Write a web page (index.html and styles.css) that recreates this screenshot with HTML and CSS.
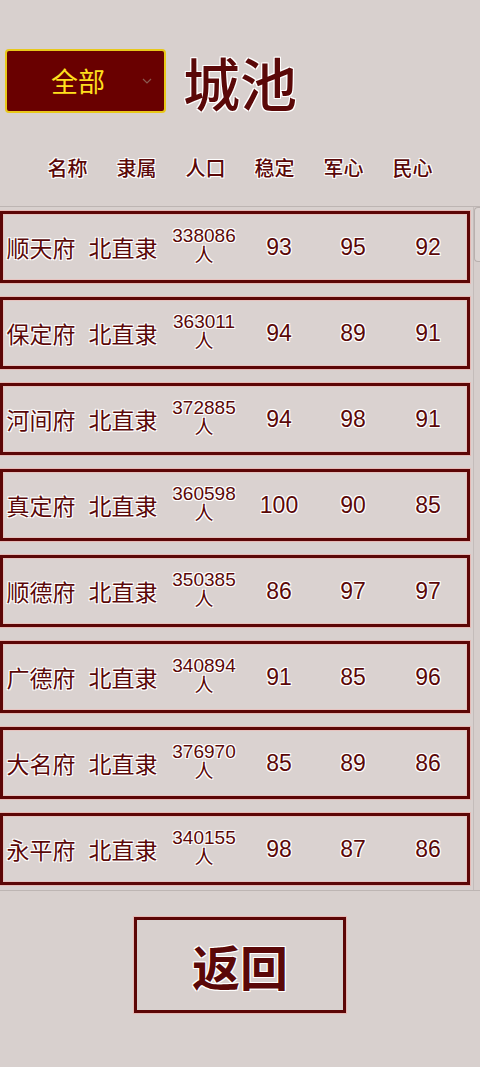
FILE: index.html
```html
<!DOCTYPE html>
<html lang="zh">
<head>
<meta charset="utf-8">
<title>城池</title>
<link rel="stylesheet" href="styles.css">
</head>
<body>
<div class="page">
  <div class="top">
    <div class="select">
      <span class="select-label">全部</span>
      <svg class="chev" width="10" height="6" viewBox="0 0 10 6"><path d="M1 1 L5 5 L9 1" fill="none" stroke="#8a5a50" stroke-width="1.2"/></svg>
    </div>
    <h1 class="title">城池</h1>
  </div>
  <div class="head">
    <span>名称</span><span>隶属</span><span>人口</span><span>稳定</span><span>军心</span><span>民心</span>
  </div>
  <div class="list">
    <div class="rows">
      <div class="row"><span class="c name">顺天府</span><span class="c">北直隶</span><span class="c pop">338086<br>人</span><span class="c">93</span><span class="c">95</span><span class="c">92</span></div>
      <div class="row"><span class="c name">保定府</span><span class="c">北直隶</span><span class="c pop">363011<br>人</span><span class="c">94</span><span class="c">89</span><span class="c">91</span></div>
      <div class="row"><span class="c name">河间府</span><span class="c">北直隶</span><span class="c pop">372885<br>人</span><span class="c">94</span><span class="c">98</span><span class="c">91</span></div>
      <div class="row"><span class="c name">真定府</span><span class="c">北直隶</span><span class="c pop">360598<br>人</span><span class="c">100</span><span class="c">90</span><span class="c">85</span></div>
      <div class="row"><span class="c name">顺德府</span><span class="c">北直隶</span><span class="c pop">350385<br>人</span><span class="c">86</span><span class="c">97</span><span class="c">97</span></div>
      <div class="row"><span class="c name">广德府</span><span class="c">北直隶</span><span class="c pop">340894<br>人</span><span class="c">91</span><span class="c">85</span><span class="c">96</span></div>
      <div class="row"><span class="c name">大名府</span><span class="c">北直隶</span><span class="c pop">376970<br>人</span><span class="c">85</span><span class="c">89</span><span class="c">86</span></div>
      <div class="row"><span class="c name">永平府</span><span class="c">北直隶</span><span class="c pop">340155<br>人</span><span class="c">98</span><span class="c">87</span><span class="c">86</span></div>
    </div>
    <div class="track"><div class="thumb"></div></div>
  </div>
  <div class="foot">
    <button class="back">返回</button>
  </div>
</div>
</body>
</html>
```

FILE: styles.css
```css
html, body {
  margin: 0;
  padding: 0;
  background: #d8d0ce;
}
body {
  font-family: "Liberation Sans", "Noto Sans CJK SC", sans-serif;
  color: #5a0808;
}
.page {
  width: 480px;
  height: 1067px;
  overflow: hidden;
}
.top {
  display: flex;
  align-items: center;
  padding: 48px 0 0 5px;
  height: 65px;
}
.select {
  width: 157px;
  height: 60px;
  background: #690000;
  border: 2px solid #e8c81a;
  border-radius: 4px;
  display: flex;
  align-items: center;
}
.select-label {
  font-family: "Noto Sans CJK SC", sans-serif;
  color: #ffe01e;
  font-size: 27px;
  margin-left: 44px;
}
.chev {
  margin-left: 37px;
}
.title {
  margin: 0 0 0 17px;
  font-family: "Noto Sans CJK SC", sans-serif;
  font-weight: 500;
  font-size: 57px;
  line-height: 62px;
  color: #5a0808;
  text-shadow: 0 0 2px #fff, 1px 1px 0 #fff, -1px -1px 0 #fff, 1px -1px 0 #fff, -1px 1px 0 #fff;
}
.head {
  display: grid;
  grid-template-columns: repeat(6, 69px);
  padding-left: 33px;
  margin-top: 40px;
  height: 28px;
  align-items: center;
  font-family: "Noto Sans CJK SC", sans-serif;
  font-weight: 500;
  font-size: 20px;
  text-align: center;
  text-shadow: 0 0 2px #fff, 1px 1px 0 #fff, -1px -1px 0 #fff, 1px -1px 0 #fff, -1px 1px 0 #fff;
}
.list {
  margin-top: 25px;
  height: 683px;
  border-top: 1px solid #bdb5b3;
  border-bottom: 1px solid #bdb5b3;
  display: flex;
  overflow: hidden;
}
.rows {
  width: 470px;
  padding-top: 4px;
  display: flex;
  flex-direction: column;
  gap: 14px;
}
.row {
  box-sizing: border-box;
  width: 470px;
  height: 72px;
  border: 3px solid #5c0606;
  box-shadow: 0 0 0 1px #e6b8b4, inset 0 0 0 1px #e6c2be;
  background: #dad2d0;
  display: grid;
  grid-template-columns: 76px 88px 74px 76px 72px 78px;
  align-items: center;
  text-align: center;
  font-size: 23px;
  text-shadow: 0 0 2px #fff, 1px 1px 0 #fff, -1px -1px 0 #fff, 1px -1px 0 #fff, -1px 1px 0 #fff;
}
.c {
  white-space: nowrap;
}
.c.pop {
  font-size: 19px;
  line-height: 20px;
  margin-top: -3px;
}
.track {
  margin-left: 3px;
  width: 7px;
  border-left: 1px solid #c4bcba;
  background: #d6cecc;
}
.thumb {
  height: 53px;
  background: #dcd5d3;
  border: 1px solid #b8b0ae;
  border-right: none;
  border-radius: 4px 0 0 4px;
}
.foot {
  display: flex;
  justify-content: center;
  padding-top: 26px;
}
.back {
  box-sizing: border-box;
  width: 212px;
  height: 96px;
  background: #d8d0ce;
  border: 3px solid #5c0606;
  box-shadow: 0 0 0 1px #e6b8b4;
  font-family: "Noto Sans CJK SC", sans-serif;
  font-weight: 700;
  font-size: 48px;
  color: #5a0808;
  text-shadow: 0 0 2px #fff, 1px 1px 0 #fff, -1px -1px 0 #fff, 1px -1px 0 #fff, -1px 1px 0 #fff;
  padding: 0;
  cursor: pointer;
}
```
